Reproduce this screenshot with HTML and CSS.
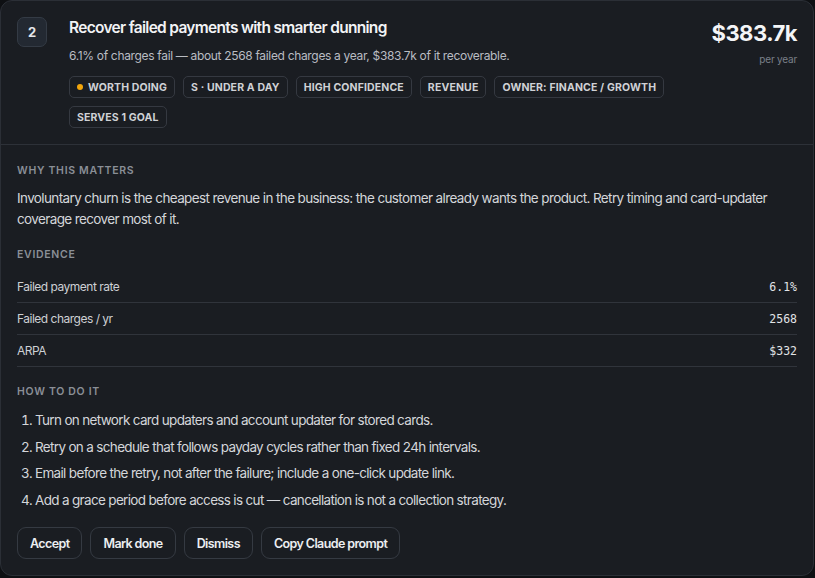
FILE: index.html
```html
<!DOCTYPE html>
<html lang="en">
<head>
  <meta charset="UTF-8" />
  <meta name="viewport" content="width=device-width, initial-scale=1.0"/>
  <title>Recommendation</title>
  <link rel="stylesheet" href="styles.css">
</head>
<body>
  <div class="card">
    <div class="card-head">
      <div class="rank">2</div>
      <div class="head-main">
        <h3 class="title">Recover failed payments with smarter dunning</h3>
        <p class="summary">6.1% of charges fail — about 2568 failed charges a year, $383.7k of it recoverable.</p>
        <div class="tags">
          <span class="tag"><span class="dot"></span>Worth doing</span>
          <span class="tag">S · Under a day</span>
          <span class="tag">High confidence</span>
          <span class="tag">Revenue</span>
          <span class="tag">Owner: Finance / Growth</span>
          <span class="tag">Serves 1 goal</span>
        </div>
      </div>
      <div class="impact">
        <div class="amount">$383.7k</div>
        <div class="period">per year</div>
      </div>
    </div>

    <div class="card-body">
      <div class="section">
        <h4>Why this matters</h4>
        <p class="why">Involuntary churn is the cheapest revenue in the business: the customer already wants the product. Retry timing and card-updater coverage recover most of it.</p>
      </div>

      <div class="section">
        <h4>Evidence</h4>
        <div class="evidence">
          <div class="row"><span>Failed payment rate</span><span class="num">6.1%</span></div>
          <div class="row"><span>Failed charges / yr</span><span class="num">2568</span></div>
          <div class="row"><span>ARPA</span><span class="num">$332</span></div>
        </div>
      </div>

      <div class="section">
        <h4>How to do it</h4>
        <ol class="steps">
          <li>Turn on network card updaters and account updater for stored cards.</li>
          <li>Retry on a schedule that follows payday cycles rather than fixed 24h intervals.</li>
          <li>Email before the retry, not after the failure; include a one-click update link.</li>
          <li>Add a grace period before access is cut — cancellation is not a collection strategy.</li>
        </ol>
      </div>

      <div class="actions">
        <button>Accept</button>
        <button>Mark done</button>
        <button>Dismiss</button>
        <button>Copy Claude prompt</button>
      </div>
    </div>
  </div>
</body>
</html>
```

FILE: styles.css
```css
body {
  margin: 0;
  background: #0e1013;
  font-family: Inter, "Noto Sans", sans-serif;
  color: #d6d8dc;
}

.card {
  width: 812px;
  background: #1a1d22;
  border: 1px solid #2b2f36;
  border-radius: 12px;
}

.card-head {
  display: flex;
  align-items: flex-start;
  padding: 16px 16px 16px;
  border-bottom: 1px solid #2d3138;
}

.rank {
  width: 28px;
  height: 28px;
  flex: none;
  display: flex;
  align-items: center;
  justify-content: center;
  background: #232932;
  border: 1px solid #343b45;
  border-radius: 7px;
  font-size: 13px;
  font-weight: 700;
  color: #e4e6ea;
  margin-right: 22px;
}

.head-main {
  flex: 1;
}

.title {
  margin: 0;
  font-size: 15.5px;
  line-height: 22px;
  font-weight: 600;
  color: #f2f3f5;
  letter-spacing: -0.7px;
}

.summary {
  margin: 8px 0 0;
  font-size: 12px;
  line-height: 18px;
  letter-spacing: -0.33px;
  color: #b9bcc2;
}

.tags {
  display: flex;
  flex-wrap: wrap;
  gap: 8px;
  margin-top: 11px;
}

.tag {
  display: inline-flex;
  align-items: center;
  height: 22px;
  box-sizing: border-box;
  padding: 0 7px;
  border: 1px solid #353941;
  border-radius: 5px;
  font-size: 10.5px;
  font-weight: 700;
  letter-spacing: 0.14px;
  text-transform: uppercase;
  color: #cfd1d5;
}

.dot {
  width: 6px;
  height: 6px;
  border-radius: 50%;
  background: #f2a60c;
  margin-right: 5px;
}

.impact {
  text-align: right;
  padding-left: 24px;
}

.amount {
  font-size: 22px;
  line-height: 28px;
  font-weight: 700;
  letter-spacing: -0.5px;
  color: #f4f5f7;
  margin-top: 2px;
}

.period {
  font-size: 10px;
  line-height: 12px;
  margin-top: 6px;
  letter-spacing: -0.2px;
  color: #7b8089;
}

.card-body {
  padding: 19px 16px 16px;
}

.section + .section {
  margin-top: 18px;
}

h4 {
  margin: 0;
  font-size: 10.5px;
  line-height: 14px;
  font-weight: 600;
  letter-spacing: 0.7px;
  text-transform: uppercase;
  color: #8a8f97;
}

.why {
  margin: 10px 0 0;
  font-size: 13.5px;
  line-height: 21px;
  letter-spacing: -0.62px;
  color: #d4d6da;
}

.evidence {
  margin-top: 9px;
}

.row {
  display: flex;
  justify-content: space-between;
  align-items: center;
  height: 31px;
  border-bottom: 1px solid #30343b;
  font-size: 12px;
  letter-spacing: -0.5px;
  color: #cdd0d4;
}

.num {
  font-family: "DejaVu Sans Mono", monospace;
  font-size: 11.5px;
  letter-spacing: 0;
  color: #e2e4e7;
}

.steps {
  margin: 11px 0 0;
  padding-left: 18px;
  font-size: 13.5px;
  line-height: 20px;
  letter-spacing: -0.67px;
  color: #d4d6da;
}

.steps li + li {
  margin-top: 6.7px;
}

.actions {
  display: flex;
  gap: 8px;
  margin-top: 17px;
}

.actions button {
  height: 32px;
  padding: 0 12px;
  background: #1a1d22;
  border: 1px solid #353a42;
  border-radius: 9px;
  font-family: Inter, sans-serif;
  font-size: 12.5px;
  font-weight: 600;
  letter-spacing: -0.6px;
  color: #eceef1;
  cursor: pointer;
}
```
